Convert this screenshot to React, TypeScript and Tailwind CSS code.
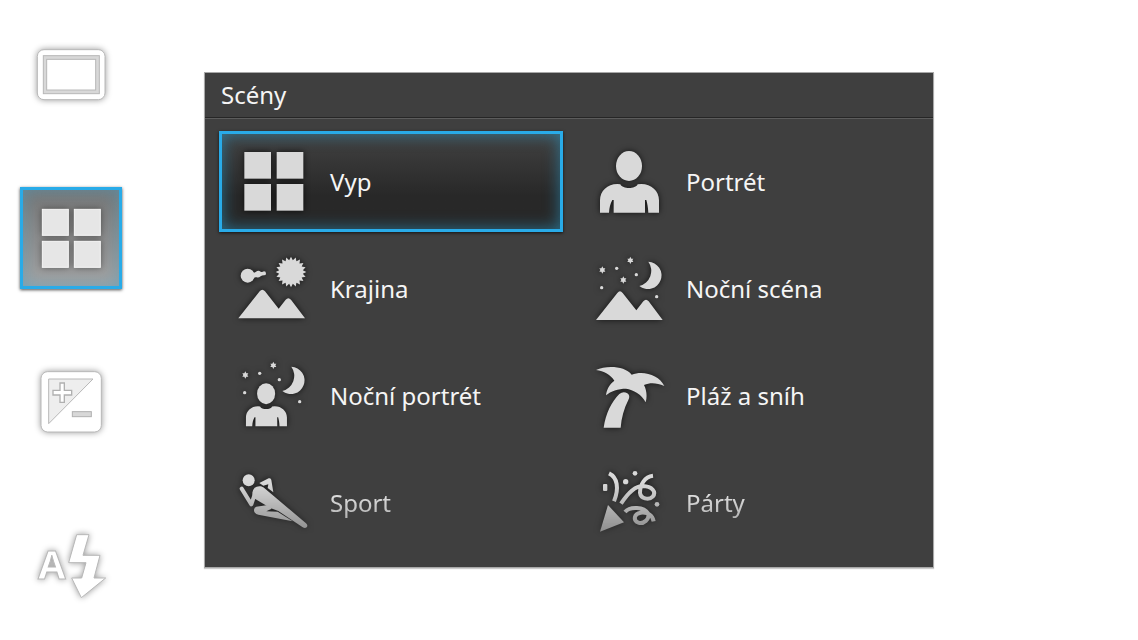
import type { ReactNode } from "react"
import clsx from "clsx"

function SceneSvg({ children }: { children: ReactNode }) {
  return (
    <svg
      viewBox="0 0 240 243"
      aria-hidden="true"
      className="h-[81px] w-20 shrink-0 overflow-visible fill-[#d9d9d9] drop-shadow-[0_0_3px_rgba(0,0,0,0.7)]"
    >
      {children}
    </svg>
  )
}

function ModeSvg({ children }: { children: ReactNode }) {
  return (
    <svg
      viewBox="0 0 240 240"
      aria-hidden="true"
      className="size-20 shrink-0 overflow-visible drop-shadow-[0_0_3px_rgba(0,0,0,0.4)]"
    >
      {children}
    </svg>
  )
}

function Person() {
  return (
    <>
      <ellipse cx="117" cy="75" rx="39" ry="45" />
      <path d="M30 215V178C30 150 52 129 82 129Q88 129 91 130C98 145 136 145 143 130Q146 129 154 129C184 129 207 150 207 178V215H175C174 200 172 188 169 177H165V215H71V177H67C61 188 58 200 57 215Z" />
    </>
  )
}

function Mountains() {
  return (
    <path d="M13 211L77 130Q85 120 93 130L134 182L155 155Q163 146 171 155L213 211Z" />
  )
}

const starPoints = "0,-11 3,-5 9,-5 6,0 9,5 3,5 0,11 -3,5 -9,5 -6,0 -9,-5 -3,-5"

function NightSky() {
  return (
    <>
      <polygon points={starPoints} transform="translate(37 66)" />
      <polygon points={starPoints} transform="translate(121 37)" />
      <circle cx="80" cy="61" r="5" />
      <circle cx="139" cy="80" r="5" />
      <circle cx="35" cy="119" r="5" />
      <circle cx="200" cy="146" r="5" />
      <path d="M175 41A41 41 0 1 1 148 114A47 47 0 0 0 175 41Z" />
    </>
  )
}

// 20 rays, alternating outer and inner radius
const sunPoints = Array.from({ length: 40 }, (_, i) => {
  const r = i % 2 === 0 ? 46 : 36
  const a = (i * Math.PI) / 20
  return `${(171 + r * Math.sin(a)).toFixed(1)},${(72 - r * Math.cos(a)).toFixed(1)}`
}).join(" ")

const scenes = [
  {
    label: "Vyp",
    icon: (
      <>
        <rect x="31" y="33" width="80" height="80" />
        <rect x="128" y="33" width="80" height="80" />
        <rect x="31" y="129" width="80" height="80" />
        <rect x="128" y="129" width="80" height="80" />
      </>
    ),
  },
  { label: "Portrét", icon: <Person /> },
  {
    label: "Krajina",
    icon: (
      <>
        <circle cx="41" cy="83" r="21" />
        <path d="M56 74Q62 75 66 71Q73 66 80 71Q84 74 90 70Q96 70 96 77Q96 82 90 82Q84 82 80 85Q74 90 68 88Q62 87 56 92Z" />
        <polygon points={sunPoints} />
        <Mountains />
      </>
    ),
  },
  {
    label: "Noční scéna",
    icon: (
      <>
        <NightSky />
        <polygon points={starPoints} transform="translate(100 96)" />
        <g transform="translate(5 5)">
          <Mountains />
        </g>
      </>
    ),
  },
  {
    label: "Noční portrét",
    icon: (
      <>
        <g transform="translate(-3 -6)">
          <NightSky />
        </g>
        <g transform="translate(15 64) scale(0.695)">
          <Person />
        </g>
      </>
    ),
  },
  {
    label: "Pláž a sníh",
    icon: (
      <>
        <path d="M18 45C50 30 105 33 125 59C160 45 208 60 223 93C200 84 182 82 162 90C170 106 172 124 167 142C155 118 130 104 108 101C85 101 62 108 48 121C50 104 58 88 73 77C62 60 42 48 18 45Z" />
        <path d="M41 218C47 175 65 140 88 117Q100 107 112 115Q122 122 115 135C102 160 94 190 92 218Z" />
      </>
    ),
  },
  {
    label: "Sport",
    fading: true,
    icon: (
      <g transform="translate(-27 -6)">
        <circle cx="71" cy="61" r="18" />
        <path d="M103 69L131 55Q138 53 139 60L145 97L128 84L130 73L115 77Z" />
        <path
          d="M50 86L79 133L90 100"
          fill="none"
          className="stroke-[#d9d9d9]"
          strokeWidth="12"
          strokeLinecap="round"
          strokeLinejoin="round"
        />
        <path d="M82 98Q86 76 108 79Q116 81 124 89L243 190Q250 197 245 202Q240 206 232 201L160 153L136 144L92 118Q82 112 82 98Z" />
        <path d="M94 140L128 135L140 146L124 154L158 155L203 184L100 164Q86 160 87 149Q88 142 94 140Z" />
      </g>
    ),
  },
  {
    label: "Párty",
    fading: true,
    icon: (
      <g transform="translate(-30 -6)">
        <path d="M84 135L132 187L60 215Z" />
        <rect x="69" y="72" width="13" height="21" rx="3" />
        <circle cx="137" cy="65" r="8" />
        <circle cx="165" cy="40" r="7" />
        <circle cx="231" cy="133" r="7" />
        <g fill="none" className="stroke-[#d9d9d9]" strokeWidth="12">
          <path d="M87 40C112 52 118 84 102 124" />
          <path d="M123 131C140 105 162 78 188 78C217 79 230 96 218 110C206 122 182 116 180 98C180 74 194 50 219 47" />
          <path d="M135 156C150 138 192 141 204 160C210 178 190 193 175 188C158 182 162 161 182 158C202 156 218 165 221 184" />
        </g>
      </g>
    ),
  },
]

const modes = [
  {
    label: "Režim snímání",
    icon: (
      <g transform="translate(-63 -12)" strokeWidth="3">
        <rect x="82" y="59" width="203" height="150" rx="20" fill="white" stroke="#b8b8b8" />
        <rect x="100" y="77" width="168" height="114" fill="#d8d8d8" stroke="#b8b8b8" />
        <rect x="110" y="88" width="147" height="92" fill="white" stroke="#b8b8b8" />
      </g>
    ),
  },
  {
    label: "Scény",
    selected: true,
    icon: (
      <g transform="translate(-63 -69)" fill="#e6e6e6" stroke="#f8f8f8" strokeWidth="3">
        <rect x="97" y="103" width="78" height="78" />
        <rect x="193" y="103" width="78" height="78" />
        <rect x="97" y="199" width="78" height="78" />
        <rect x="193" y="199" width="78" height="78" />
      </g>
    ),
  },
  {
    label: "Kompenzace expozice",
    icon: (
      <g transform="translate(-63 -21)" strokeWidth="3">
        <rect x="93" y="50" width="181" height="181" rx="20" fill="white" stroke="#b8b8b8" />
        <path d="M116 72H249L116 206Z" fill="#eeeeee" stroke="#b8b8b8" />
        <path
          d="M150 84H163V106H185V120H163V142H150V120H129V106H150Z"
          fill="white"
          stroke="#b0b0b0"
          strokeWidth="4"
        />
        <rect x="187" y="170" width="57" height="15" fill="#d8d8d8" stroke="#b0b0b0" />
      </g>
    ),
  },
  {
    label: "Automatický blesk",
    icon: (
      <g transform="translate(-63 -18)" fill="white" stroke="#b8b8b8" strokeWidth="3">
        <text x="84" y="177" fontSize="120" fontWeight="700">
          A
        </text>
        <path d="M200 44H237L219 106H270L252 174H287L214 233L185 174H215L228 128H176Z" />
      </g>
    ),
  },
]

function Sidebar() {
  return (
    <nav aria-label="Nastavení" className="flex shrink-0 flex-col gap-[62px] px-5 pt-[23px]">
      {modes.map((mode) => (
        <button
          key={mode.label}
          type="button"
          aria-label={mode.label}
          aria-pressed={!!mode.selected}
          className={clsx(
            "flex size-[102px] items-center justify-center border-3",
            mode.selected
              ? "border-[#29abe8] bg-linear-to-b from-[#757575] to-[#a3a3a3] shadow-[0_1px_3px_rgba(0,0,0,0.7),inset_0_0_16px_rgba(80,160,195,0.6)]"
              : "border-transparent"
          )}
        >
          <ModeSvg>{mode.icon}</ModeSvg>
        </button>
      ))}
    </nav>
  )
}

export default function App() {
  return (
    <div className="flex min-h-screen bg-white font-['Noto_Sans',sans-serif]">
      <Sidebar />
      <main className="flex-1 pt-[72px] pr-[204px] pl-[62px]">
        <section className="border border-[#a8a8a8] bg-[#3f3f3f] text-2xl text-[#f5f5f5] shadow-[0_1px_1px_rgba(0,0,0,0.2)]">
          <h1 className="border-b border-[#262626] px-4 py-1.5">Scény</h1>
          <div className="grid grid-cols-2 gap-x-3 gap-y-1.5 border-t border-[#5c5c5c] px-3.5 pt-3 pb-3.5">
            {scenes.map((scene, i) => (
              <button
                key={scene.label}
                type="button"
                aria-pressed={i === 0}
                className={clsx(
                  "flex h-[101px] items-center gap-4 border-3 px-3 text-left",
                  i === 0
                    ? "border-[#29abe8] bg-linear-to-b from-[#424242] to-[#282828] to-65% shadow-[0_1px_3px_rgba(0,0,0,0.7),inset_0_0_16px_rgba(41,150,195,0.65)]"
                    : "border-transparent",
                  scene.fading && "[mask-image:linear-gradient(to_bottom,black_30%,transparent_130%)]"
                )}
              >
                <SceneSvg>{scene.icon}</SceneSvg>
                {scene.label}
              </button>
            ))}
          </div>
        </section>
      </main>
    </div>
  )
}
